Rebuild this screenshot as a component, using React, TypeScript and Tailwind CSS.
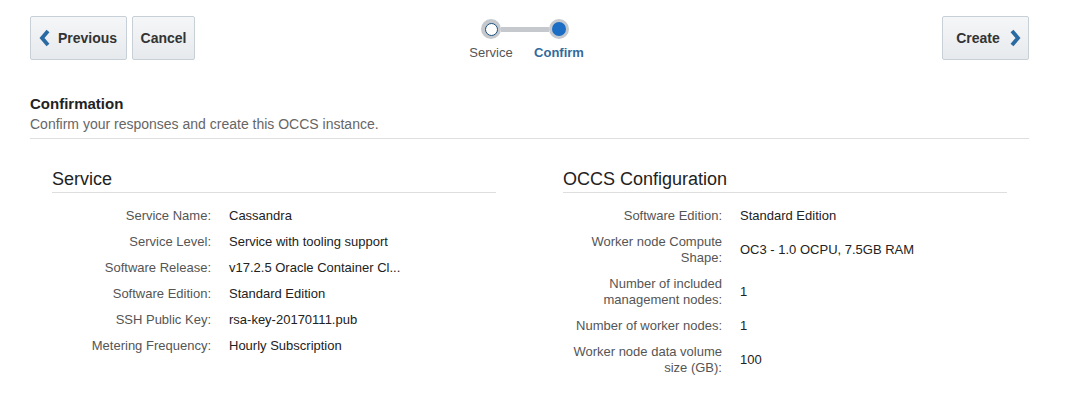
import * as React from "react";

type Row = { label: string; value: string };

const serviceRows: Row[] = [
  { label: "Service Name:", value: "Cassandra" },
  { label: "Service Level:", value: "Service with tooling support" },
  { label: "Software Release:", value: "v17.2.5 Oracle Container Cl..." },
  { label: "Software Edition:", value: "Standard Edition" },
  { label: "SSH Public Key:", value: "rsa-key-20170111.pub" },
  { label: "Metering Frequency:", value: "Hourly Subscription" },
];

const configRows: Row[] = [
  { label: "Software Edition:", value: "Standard Edition" },
  { label: "Worker node Compute Shape:", value: "OC3 - 1.0 OCPU, 7.5GB RAM" },
  { label: "Number of included management nodes:", value: "1" },
  { label: "Number of worker nodes:", value: "1" },
  { label: "Worker node data volume size (GB):", value: "100" },
];

function Chevron({ dir }: { dir: "left" | "right" }) {
  return (
    <svg width="12" height="18" viewBox="0 0 12 18" className="shrink-0">
      <polyline
        points={dir === "left" ? "9,2 3,9 9,16" : "3,2 9,9 3,16"}
        fill="none"
        stroke="#2a6aa3"
        strokeWidth="3.8"
        strokeLinejoin="miter"
      />
    </svg>
  );
}

function NavButton({ children, className }: { children: React.ReactNode; className?: string }) {
  return (
    <button
      className={
        "flex h-[44px] items-center rounded-[2px] border border-[#c8d0d7] bg-gradient-to-b from-[#f5f6f8] to-[#e7eaed] text-[14px] font-bold text-[#333] " +
        (className ?? "")
      }
    >
      {children}
    </button>
  );
}

function Section({ title, rows }: { title: string; rows: Row[] }) {
  return (
    <div>
      <h2 className="border-b border-[#dedede] pb-[1px] text-[18px] leading-[24px] text-[#222]">{title}</h2>
      <div className="mt-[10px] flex flex-col">
        {rows.map((r) => (
          <div key={r.label} className="flex items-center py-[5px]">
            <div className="w-[159px] shrink-0 text-right text-[13px] leading-[16px] text-[#555]">{r.label}</div>
            <div className="ml-[18px] whitespace-nowrap text-[13px] leading-[16px] text-[#222]">{r.value}</div>
          </div>
        ))}
      </div>
    </div>
  );
}

export default function App() {
  return (
    <div className="min-h-[410px] bg-white pl-[30px] pr-[49px] pt-[16px] font-['Liberation_Sans',Arial,sans-serif]">
      {/* top navigation */}
      <div className="grid grid-cols-[1fr_auto_1fr] items-start">
        <div className="flex gap-[5px]">
          <NavButton className="w-[97px] gap-[7px] pl-[8px]">
            <Chevron dir="left" />
            <span>Previous</span>
          </NavButton>
          <NavButton className="w-[63px] justify-center">Cancel</NavButton>
        </div>

        <div className="mr-[9px] flex flex-col items-center pt-[3px]">
          <div className="flex items-center">
            <div className="flex h-[20px] w-[20px] items-center justify-center rounded-full bg-[#c5c9cd]">
              <div className="h-[13px] w-[13px] rounded-full border-[1.5px] border-[#1d4f7a] bg-white" />
            </div>
            <div className="h-[5px] w-[48px] bg-[#c5c9cd]" />
            <div className="flex h-[20px] w-[20px] items-center justify-center rounded-full bg-[#c5c9cd]">
              <div className="h-[14px] w-[14px] rounded-full bg-[#1c6dc4]" />
            </div>
          </div>
          <div className="mt-[6px] flex text-[13px] leading-[16px]">
            <span className="w-[68px] text-center text-[#555]">Service</span>
            <span className="w-[68px] text-center font-bold text-[#336a9c]">Confirm</span>
          </div>
        </div>

        <div className="flex justify-end">
          <NavButton className="w-[87px] justify-center gap-[9px] pl-[6px]">
            <span>Create</span>
            <Chevron dir="right" />
          </NavButton>
        </div>
      </div>

      {/* header */}
      <div className="mt-[33px] border-b border-[#dedede] pb-[5px]">
        <h1 className="text-[15px] font-bold leading-[20px] text-[#222]">Confirmation</h1>
        <p className="mt-[1px] text-[14px] leading-[18px] text-[#666]">
          Confirm your responses and create this OCCS instance.
        </p>
      </div>

      {/* details */}
      <div className="mt-[28px] grid grid-cols-2 gap-[67px] px-[22px]">
        <Section title="Service" rows={serviceRows} />
        <Section title="OCCS Configuration" rows={configRows} />
      </div>
    </div>
  );
}
